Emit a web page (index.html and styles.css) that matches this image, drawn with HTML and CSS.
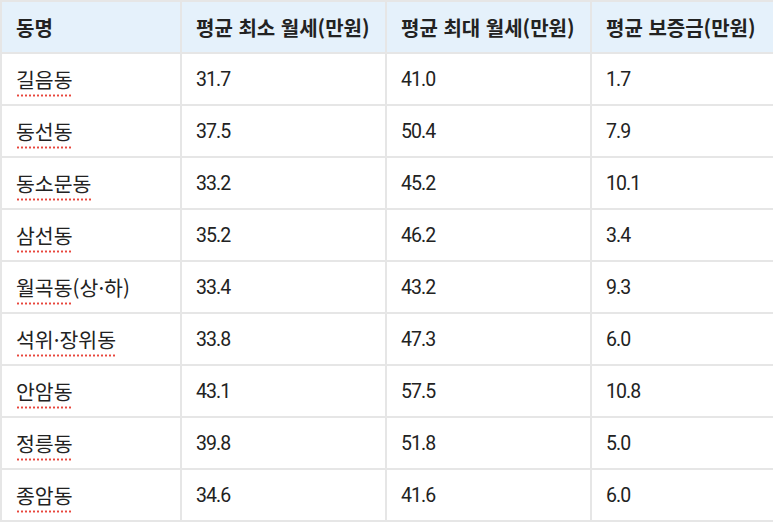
FILE: index.html
```html
<!DOCTYPE html>
<html lang="ko">
<head>
<meta charset="utf-8">
<link rel="stylesheet" href="styles.css">
</head>
<body>
<table class="rent">
  <colgroup>
    <col class="c1"><col class="c2"><col class="c3"><col class="c4">
  </colgroup>
  <thead>
    <tr><th>동명</th><th>평균 최소 월세(만원)</th><th>평균 최대 월세(만원)</th><th>평균 보증금(만원)</th></tr>
  </thead>
  <tbody>
    <tr><td><span class="sp">길음동</span></td><td class="num">31.7</td><td class="num">41.0</td><td class="num">1.7</td></tr>
    <tr><td><span class="sp">동선동</span></td><td class="num">37.5</td><td class="num">50.4</td><td class="num">7.9</td></tr>
    <tr><td><span class="sp">동소문동</span></td><td class="num">33.2</td><td class="num">45.2</td><td class="num">10.1</td></tr>
    <tr><td><span class="sp">삼선동</span></td><td class="num">35.2</td><td class="num">46.2</td><td class="num">3.4</td></tr>
    <tr><td><span class="sp">월곡동</span>(상·하)</td><td class="num">33.4</td><td class="num">43.2</td><td class="num">9.3</td></tr>
    <tr><td><span class="sp">석위·장위동</span></td><td class="num">33.8</td><td class="num">47.3</td><td class="num">6.0</td></tr>
    <tr><td><span class="sp">안암동</span></td><td class="num">43.1</td><td class="num">57.5</td><td class="num">10.8</td></tr>
    <tr><td><span class="sp">정릉동</span></td><td class="num">39.8</td><td class="num">51.8</td><td class="num">5.0</td></tr>
    <tr><td><span class="sp">종암동</span></td><td class="num">34.6</td><td class="num">41.6</td><td class="num">6.0</td></tr>
  </tbody>
</table>
</body>
</html>
```
FILE: styles.css
```css
html, body {
  margin: 0;
  padding: 0;
  background: #ffffff;
}
.rent {
  border-collapse: collapse;
  table-layout: fixed;
  width: 773px;
  font-family: "Noto Sans CJK KR", "Noto Sans", sans-serif;
  font-size: 20.5px;
  color: #222222;
  border: 2px solid #e6e6e6;
}
.c1 { width: 180px; }
.c2 { width: 205px; }
.c3 { width: 205px; }
.c4 { width: 183px; }
.rent th, .rent td {
  border: 2px solid #e6e6e6;
  text-align: left;
  padding: 0 0 0 14px;
  white-space: nowrap;
}
.rent th {
  height: 50px;
  background: #e5f1fb;
  font-weight: 600;
  font-size: 20px;
}
.rent td {
  height: 50px;
  font-weight: 400;
}
.rent td.num {
  font-family: Roboto, "Noto Sans CJK KR", sans-serif;
  font-size: 19.5px;
  letter-spacing: -0.9px;
  padding-left: 14px;
}
.sp {
  padding-bottom: 3px;
  background-image: radial-gradient(circle, #e8463c 0, #e8463c 0.9px, transparent 1.3px);
  background-size: 4px 3px;
  background-repeat: repeat-x;
  background-position: 0 100%;
}
```
